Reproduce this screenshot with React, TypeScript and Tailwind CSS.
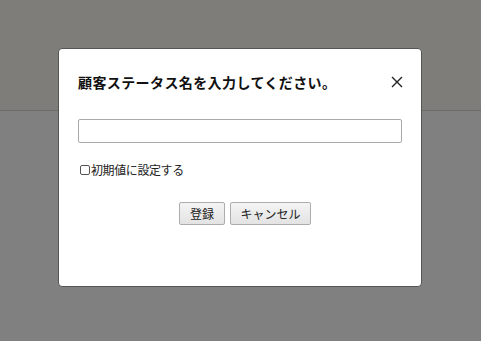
export default function App() {
  return (
    <div
      className="relative h-[341px] w-[481px] overflow-hidden bg-[#808080]"
      style={{ fontFamily: '"Noto Sans CJK JP", "Noto Sans", sans-serif' }}
    >
      {/* page header behind the overlay */}
      <div className="h-[111px] border-b border-[#6c6b67] bg-[#7e7d79]" />

      {/* dialog */}
      <div className="absolute left-[58px] top-[48px] flex h-[239px] w-[364px] flex-col rounded-[4px] border border-[#555] bg-white pl-[19px] pr-[19px] pt-[23px]">
        <div className="flex h-[20px] items-center justify-between">
          <h2 className="text-[14px] font-bold leading-[20px] tracking-[0.4px] text-[#111]">
            顧客ステータス名を入力してください。
          </h2>
          <button className="mr-[-1px] flex h-[12px] w-[12px] items-center justify-center">
            <svg viewBox="0 0 12 12" className="h-[12px] w-[12px]">
              <path
                d="M1 1L11 11M11 1L1 11"
                stroke="#222"
                strokeWidth="1.4"
                fill="none"
              />
            </svg>
          </button>
        </div>

        <input
          type="text"
          className="mt-[27px] h-[24px] w-[324px] rounded-[2px] border border-[#a9a9a9] bg-white px-1 text-[13px] outline-none"
        />

        <label className="mt-[19px] flex h-[16px] items-center gap-[1px] pl-[2px] text-[12px] leading-[16px] tracking-[-0.4px] text-[#222]">
          <input
            type="checkbox"
            className="h-[10px] w-[10px] appearance-none rounded-[2px] border border-[#555] bg-white"
          />
          初期値に設定する
        </label>

        <div className="mt-[24px] flex gap-[5px] pl-[101px]">
          <button className="h-[23px] w-[46px] rounded-[2px] border border-[#acacac] bg-gradient-to-b from-[#f4f4f4] to-[#e3e3e3] text-[12px] leading-[20px] text-[#222]">
            登録
          </button>
          <button className="h-[23px] w-[81px] rounded-[2px] border border-[#acacac] bg-gradient-to-b from-[#f4f4f4] to-[#e3e3e3] text-[12px] leading-[20px] text-[#222]">
            キャンセル
          </button>
        </div>
      </div>
    </div>
  );
}
